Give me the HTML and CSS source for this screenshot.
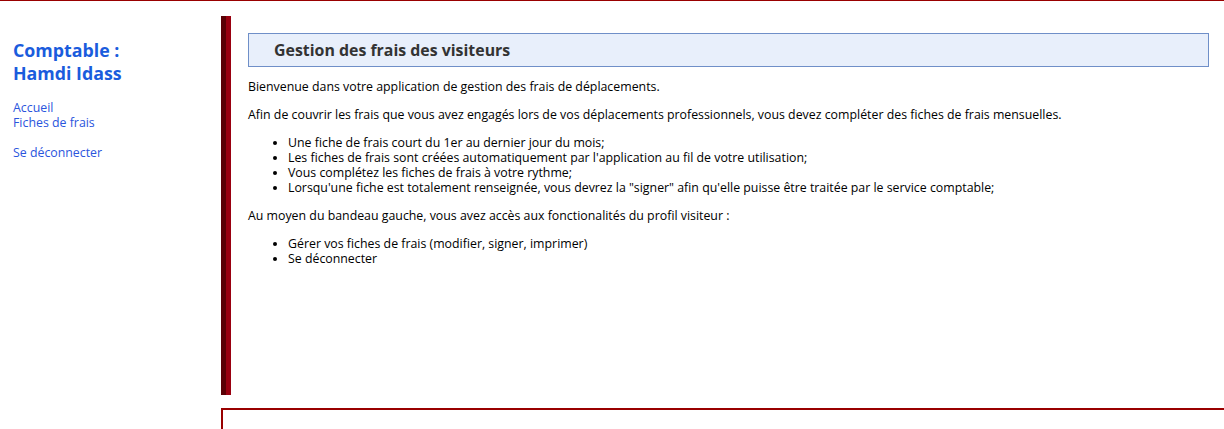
FILE: index.html
```html
<!DOCTYPE html>
<html lang="fr">
<head>
<meta charset="utf-8">
<title>Gestion des frais</title>
<link rel="stylesheet" href="styles.css">
</head>
<body>
<div class="topline"></div>
<div class="layout">
  <aside class="sidebar">
    <h2 class="user"><span class="user-line">Comptable :</span><span class="user-line">Hamdi Idass</span></h2>
    <ul class="menu">
      <li><a href="#">Accueil</a></li>
      <li><a href="#">Fiches de frais</a></li>
    </ul>
    <ul class="menu">
      <li><a href="#">Se déconnecter</a></li>
    </ul>
  </aside>
  <main class="content">
    <h1 class="title">Gestion des frais des visiteurs</h1>
    <p>Bienvenue dans votre application de gestion des frais de déplacements.</p>
    <p>Afin de couvrir les frais que vous avez engagés lors de vos déplacements professionnels, vous devez compléter des fiches de frais mensuelles.</p>
    <ul class="list">
      <li>Une fiche de frais court du 1er au dernier jour du mois;</li>
      <li>Les fiches de frais sont créées automatiquement par l'application au fil de votre utilisation;</li>
      <li>Vous complétez les fiches de frais à votre rythme;</li>
      <li>Lorsqu'une fiche est totalement renseignée, vous devrez la "signer" afin qu'elle puisse être traitée par le service comptable;</li>
    </ul>
    <p>Au moyen du bandeau gauche, vous avez accès aux fonctionalités du profil visiteur :</p>
    <ul class="list">
      <li>Gérer vos fiches de frais (modifier, signer, imprimer)</li>
      <li>Se déconnecter</li>
    </ul>
  </main>
</div>
<footer class="footer"></footer>
</body>
</html>
```
FILE: styles.css
```css
html, body {
  margin: 0;
  padding: 0;
  background: #ffffff;
}
body {
  font-family: "Open Sans", "DejaVu Sans", sans-serif;
  font-size: 12.35px;
  line-height: 15px;
  color: #000;
  overflow: hidden;
}
.topline {
  height: 1px;
  background: #990000;
}
.layout {
  display: flex;
  margin-top: 15px;
}
.sidebar {
  width: 221px;
  flex: none;
  padding-left: 13px;
  box-sizing: border-box;
}
.user {
  margin: 23px 0 15px;
  font-size: 17.8px;
  line-height: 23px;
  font-weight: bold;
  color: #1a5cdd;
}
.user-line {
  display: block;
}
.menu {
  list-style: none;
  margin: 0 0 15px;
  padding: 0;
}
.menu a {
  color: #2a55dd;
  text-decoration: none;
}
.content {
  flex: 1;
  height: 379px;
  box-sizing: border-box;
  border-left: 5px solid #5a0005;
  box-shadow: inset 5px 0 0 #990010;
  padding: 17px 15px 0 22px;
}
.title {
  margin: 0 0 12px;
  height: 34px;
  box-sizing: border-box;
  border: 1px solid #6f8fc8;
  background: #e8effb;
  color: #333333;
  font-size: 15.9px;
  font-weight: bold;
  line-height: 32px;
  padding-left: 25px;
}
.content p {
  margin: 0 0 13px;
}
.list {
  margin: 0 0 13px;
  padding-left: 40px;
}
.footer {
  margin: 13px 0 0 221px;
  height: 30px;
  border-top: 2px solid #990000;
  border-left: 2px solid #990000;
}
```
